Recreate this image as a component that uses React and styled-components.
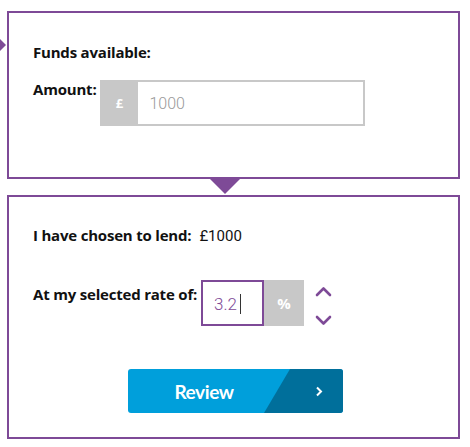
import React from "react";
import styled, { createGlobalStyle } from "styled-components";

const PURPLE = "#7e4a97";
const GREY = "#c8c8c8";

const Global = createGlobalStyle`
  html, body { margin: 0; padding: 0; background: #fff; }
  body { font-family: "Open Sans", "Liberation Sans", sans-serif; color: #111; }
`;

const Page = styled.div`
  display: flex;
  flex-direction: column;
  gap: 16px;
  width: 453px;
  padding: 11px 0 0 7px;
`;

const Panel = styled.section`
  position: relative;
  box-sizing: border-box;
  min-height: ${(p) => p.$h || "0px"};
  border: 2px solid ${PURPLE};
  padding: ${(p) => p.$pad};
  display: flex;
  flex-direction: column;
  align-items: flex-start;
`;

const LeftPointer = styled.div`
  position: absolute;
  left: -18px;
  top: 17px;
  width: 0;
  height: 0;
  border-top: 15px solid transparent;
  border-bottom: 15px solid transparent;
  border-left: 15px solid ${PURPLE};
`;

const DownPointer = styled.div`
  position: absolute;
  left: 201px;
  top: calc(100% + 2px);
  width: 0;
  height: 0;
  border-left: 15px solid transparent;
  border-right: 15px solid transparent;
  border-top: 15px solid ${PURPLE};
`;

const Label = styled.div`
  font-size: 15px;
  line-height: 18px;
  font-weight: 700;
  letter-spacing: -0.2px;
  margin-top: ${(p) => p.$mt || "0px"};
  white-space: nowrap;
`;

const Value = styled.span`
  font-family: Roboto, "Liberation Sans", sans-serif;
  font-weight: 400;
  font-size: 15px;
  letter-spacing: 0;
  margin-left: 8px;
`;

const Row = styled.div`
  display: flex;
  align-items: flex-start;
  gap: 4px;
  margin-top: ${(p) => p.$mt};
`;

const Group = styled.div`
  display: flex;
  height: 46px;
`;

const Addon = styled.div`
  width: ${(p) => p.$w}px;
  background: ${GREY};
  color: #fff;
  font-weight: 700;
  font-size: ${(p) => p.$fs}px;
  display: flex;
  align-items: center;
  justify-content: center;
`;

const AmountField = styled.div`
  box-sizing: border-box;
  width: 227px;
  border: 2px solid ${GREY};
  border-left: none;
  display: flex;
  align-items: center;
  padding-left: 11px;
  font-family: Roboto, "Liberation Sans", sans-serif;
  font-weight: 300;
  font-size: 16px;
  color: #999;
`;

const RateField = styled.div`
  box-sizing: border-box;
  width: 63px;
  border: 2px solid ${PURPLE};
  display: flex;
  align-items: center;
  padding-left: 11px;
  padding-top: 2px;
  font-family: Roboto, "Liberation Sans", sans-serif;
  font-weight: 300;
  font-size: 17px;
  color: ${PURPLE};
`;

const Caret = styled.span`
  display: inline-block;
  width: 1px;
  height: 20px;
  background: #333;
  margin-left: 3px;
`;

const Spinner = styled.div`
  display: flex;
  flex-direction: column;
  gap: 16px;
  margin: 6px 0 0 11px;
`;

const SpinBtn = styled.button`
  border: none;
  background: none;
  padding: 0;
  display: block;
  cursor: pointer;
  line-height: 0;
`;

const Footer = styled.div`
  align-self: stretch;
  display: flex;
  justify-content: center;
  margin: 43px 0 0 -24px;
  padding-left: 4px;
`;

const ReviewButton = styled.button`
  display: flex;
  width: 215px;
  height: 44px;
  padding: 0;
  border: none;
  border-radius: 3px;
  overflow: hidden;
  background: #009fdb;
  cursor: pointer;
  font-family: Lato, "Liberation Sans", sans-serif;
`;

const ReviewText = styled.span`
  flex: 1;
  display: flex;
  align-items: center;
  justify-content: center;
  padding-left: 16px;
  color: #fff;
  font-size: 19px;
  font-weight: 700;
  letter-spacing: -0.4px;
`;

const ArrowPart = styled.span`
  width: 79px;
  background: #006f9b;
  clip-path: polygon(26px 0, 100% 0, 100% 100%, 0 100%);
  display: flex;
  align-items: center;
  padding-left: 51px;
  box-sizing: border-box;
`;

const Chevron = ({ up }) => (
  <svg width="17" height="12" viewBox="0 0 17 12">
    <polyline
      points={up ? "2,9 8.5,2.5 15,9" : "2,3 8.5,9.5 15,3"}
      fill="none"
      stroke={PURPLE}
      strokeWidth="2.6"
      strokeLinecap="round"
      strokeLinejoin="round"
    />
  </svg>
);

export default function App() {
  return (
    <>
      <Global />
      <Page>
        <Panel $pad="30px 0 0 24px" $h="168px">
          <LeftPointer />
          <Label>Funds available:</Label>
          <Row $mt="19px">
            <Label>Amount:</Label>
            <Group>
              <Addon $w={38} $fs={13}>£</Addon>
              <AmountField>1000</AmountField>
            </Group>
          </Row>
          <DownPointer />
        </Panel>
        <Panel $pad="29px 0 24px 24px">
          <Label>
            I have chosen to lend:<Value>£1000</Value>
          </Label>
          <Row $mt="35px">
            <Label $mt="5px">At my selected rate of:</Label>
            <Group>
              <RateField>
                3.2<Caret />
              </RateField>
              <Addon $w={40} $fs={15}>%</Addon>
              <Spinner>
                <SpinBtn aria-label="increase">
                  <Chevron up />
                </SpinBtn>
                <SpinBtn aria-label="decrease">
                  <Chevron />
                </SpinBtn>
              </Spinner>
            </Group>
          </Row>
          <Footer>
            <ReviewButton>
              <ReviewText>Review</ReviewText>
              <ArrowPart>
                <svg width="8" height="11" viewBox="0 0 8 11">
                  <polyline points="2,1.5 6,5.5 2,9.5" fill="none" stroke="#fff" strokeWidth="2" />
                </svg>
              </ArrowPart>
            </ReviewButton>
          </Footer>
        </Panel>
      </Page>
    </>
  );
}
